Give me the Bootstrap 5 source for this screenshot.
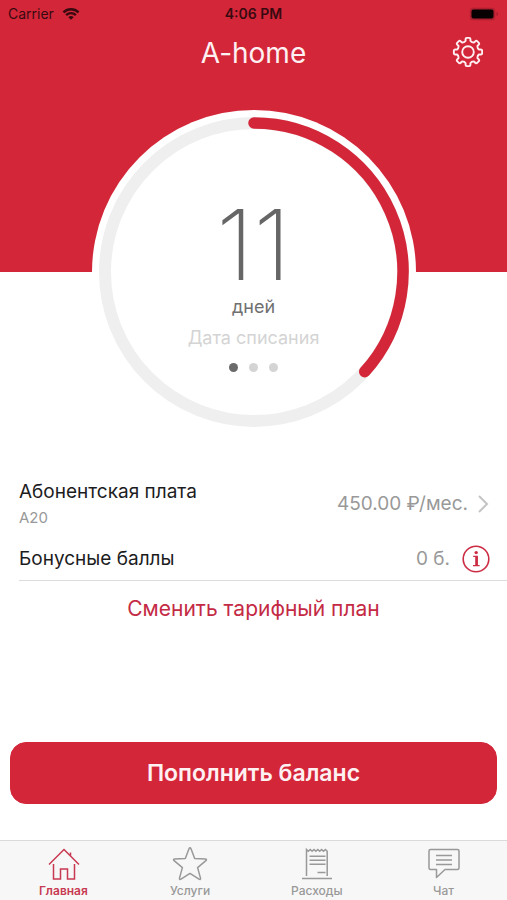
<!DOCTYPE html>
<html lang="ru">
<head>
<meta charset="utf-8">
<meta name="viewport" content="width=device-width, initial-scale=1">
<title>A-home</title>
<link href="https://cdn.jsdelivr.net/npm/bootstrap@5.3.0/dist/css/bootstrap.min.css" rel="stylesheet">
<style>
  :root { --brand: #d32639; --ring: 324px; }
  body { font-family: Inter, "Liberation Sans", sans-serif; color: #1c1c1e; background: #fff; }
  .hero { background: linear-gradient(var(--brand), var(--brand)) top / 100% calc(100% - var(--ring) / 2) no-repeat; }
  .status-bar { font-size: 14px; line-height: 28px; color: #380a10; }
  .status-time { font-weight: 600; }
  .title-bar { height: 50px; margin-bottom: 32px; }
  .side-slot { width: 32px; }
  .app-title { font-size: 28px; line-height: 50px; font-weight: 400; color: #fff0f2; }
  .dial { width: var(--ring); height: var(--ring); }
  .dial > * { grid-area: 1 / 1; }
  .dial-text { padding-top: 87px; }
  .dial-count { font-size: 98px; line-height: 96px; font-weight: 200; color: #666; }
  .dial-unit { font-size: 18px; line-height: 28px; color: #707070; }
  .dial-note { font-size: 18px; line-height: 34px; color: #d4d4d4; }
  .dots { gap: 11px; padding-top: 8px; }
  .dot { width: 9px; height: 9px; background: #d4d4d4; }
  .dot.on { background: #6a6a6a; }
  .details { padding: 44px 0 0 19px; }
  .line-item { padding-right: 17px; font-size: 19px; line-height: 28px; }
  .sub { font-size: 15px; line-height: 24px; color: #999; }
  .amount { color: #999; }
  .chevron { color: #c4c4c6; }
  .info { color: #cc2c44; }
  .bonus { padding-top: 8px; height: 51px; border-bottom: 1px solid #dcdcde; }
  .link-brand { font-size: 21px; line-height: 56px; color: #c42a44; }
  .pay { margin: 0 10px 36px; }
  .btn-pay { --bs-btn-color: #fff0f2; --bs-btn-bg: var(--brand); --bs-btn-border-color: var(--brand);
    --bs-btn-hover-color: #fff; --bs-btn-hover-bg: #b91f31; --bs-btn-hover-border-color: #b91f31;
    height: 62px; border-radius: 16px; font-size: 23px; font-weight: 600; }
  .tabs { height: 60px; background: #f7f7f7; border-top: 1px solid #dadada; }
  .tab { color: #999; font-size: 12px; line-height: 18px; font-weight: 500; padding-top: 4px; }
  .tab.on { color: #c83a52; font-weight: 600; }
  svg { display: block; fill: none; stroke: currentColor; }
</style>
</head>
<body class="d-flex flex-column min-vh-100">

<header class="hero">
  <div class="status-bar row g-0 ps-2 pe-2">
    <div class="col d-flex align-items-center">
      <span>Carrier</span>
      <svg class="ms-2" width="18" height="14" viewBox="0 0 20 14" stroke-width="2.6" aria-hidden="true">
        <path d="M1.6 5.2a12 12 0 0 1 16.8 0M4.6 8.3a7.6 7.6 0 0 1 10.8 0"/>
        <path d="M10 13.4L7 10.6a4.300 4.300 0 0 1 6 0z" fill="currentColor" stroke="none"/>
      </svg>
    </div>
    <div class="col status-time text-center">4:06 PM</div>
    <div class="col d-flex align-items-center justify-content-end">
      <svg width="30" height="14" viewBox="0 0 30 14" aria-hidden="true">
        <rect x=".8" y=".8" width="25.400" height="12.400" rx="3.500" stroke="none" fill="#8a1826" fill-opacity=".5"/>
        <rect x="2.500" y="2.500" width="22" height="9" rx="2" fill="#080102" stroke="none"/>
        <path d="M27.700 5v4.200c1.300-.6 1.300-3.600 0-4.200z" fill="#8a1826" stroke="none"/>
      </svg>
    </div>
  </div>
  <div class="title-bar d-flex align-items-start justify-content-between px-4">
    <span class="side-slot"></span>
    <h1 class="app-title m-0">A-home</h1>
    <button type="button" class="btn p-0 border-0 side-slot app-title" aria-label="Настройки">
      <svg width="32" height="48" viewBox="-17 -24 32 48" stroke-width="1.900" stroke-linejoin="round" aria-hidden="true">
        <circle r="5.800"/>
        <g id="gear"></g>
      </svg>
    </button>
  </div>
  <div class="dial d-grid mx-auto">
    <svg width="324" height="324" viewBox="0 0 324 324" aria-hidden="true">
      <circle cx="162" cy="162" r="162" fill="#fff" stroke="none"/>
      <circle cx="162" cy="162" r="149" stroke="#efefef" stroke-width="12"/>
      <path d="M162 13A149 149 0 0 1 272.730 261.700" stroke="#d32639" stroke-width="11.500" stroke-linecap="round"/>
    </svg>
    <div class="dial-text text-center">
      <div class="dial-count">11</div>
      <div class="dial-unit">дней</div>
      <div class="dial-note">Дата списания</div>
      <div class="dots d-flex justify-content-center">
        <span class="dot on rounded-circle"></span>
        <span class="dot rounded-circle"></span>
        <span class="dot rounded-circle"></span>
      </div>
    </div>
  </div>
</header>

<main class="flex-grow-1 d-flex flex-column">
  <section class="details">
    <a href="#plan" class="line-item d-flex align-items-center justify-content-between text-reset text-decoration-none">
      <span>
        <span class="d-block">Абонентская плата</span>
        <span class="sub d-block">A20</span>
      </span>
      <span class="amount d-flex align-items-center">450.00 ₽/мес.
        <svg class="chevron ms-2" width="14" height="20" viewBox="0 0 14 20" stroke-width="2" aria-hidden="true"><path d="M3 2l8 8-8 8"/></svg>
      </span>
    </a>
    <div class="bonus line-item d-flex align-items-center justify-content-between">
      <span>Бонусные баллы</span>
      <span class="amount d-flex align-items-center">0 б.
        <button type="button" class="btn p-0 border-0 ms-2" aria-label="О бонусных баллах">
          <svg class="info ms-1" width="28" height="28" viewBox="0 0 28 28" stroke-width="1.600" aria-hidden="true">
            <circle cx="14" cy="14" r="12.800"/>
            <path d="M11.200 11.300h4v9M11 20.700h6.600" stroke-width="1.300"/>
            <path d="M14.400 11v9.700" stroke-width="2.400"/>
            <circle cx="14.200" cy="7.600" r="1.700" fill="currentColor" stroke="none"/>
          </svg>
        </button>
      </span>
    </div>
  </section>
  <a href="#change" class="link-brand text-center text-decoration-none">Сменить тарифный план</a>
  <div class="pay mt-auto"><button type="button" class="btn btn-pay w-100">Пополнить баланс</button></div>
</main>

<nav class="tabs row g-0 text-center">
  <a href="#home" class="tab on col text-decoration-none" aria-current="page">
    <svg class="mx-auto" width="36" height="37" viewBox="-1 0 36 37" stroke-width="1.500" aria-hidden="true"><path d="M3 19.500L18 4.500l15 15M7.500 19v15h7V24h7v10h7V19M24.500 10.500V7.500"/></svg>
    Главная</a>
  <a href="#services" class="tab col text-decoration-none">
    <svg class="mx-auto" width="36" height="37" viewBox="0 0 36 37" stroke-width="1.500" stroke-linejoin="round" aria-hidden="true"><path d="M17 3.800q1-2 2 0l3.700 9.700 10.600.5q2 .3.600 1.700l-8.300 6.900 2.900 10.500q.3 2-1.500 1.100L18 28.400l-9 5.800q-1.800.9-1.500-1.100l2.900-10.500-8.300-6.900q-1.400-1.400.6-1.700l10.600-.5z"/></svg>
    Услуги</a>
  <a href="#costs" class="tab col text-decoration-none">
    <svg class="mx-auto" width="36" height="37" viewBox="0 0 36 37" stroke-width="1.500" aria-hidden="true"><path d="M7.500 31V4.500l1.800 1.800 1.900-1.800 1.900 1.800L15 4.500l1.900 1.800 1.900-1.800 1.900 1.800 1.900-1.800 1.900 1.800 1.900-1.800 1.800 1.800V31M3 33.500h30M10.500 11.200h16M10.500 15.200h16M10.500 19.200h16M18.500 27.500h8"/></svg>
    Расходы</a>
  <a href="#chat" class="tab col text-decoration-none">
    <svg class="mx-auto" width="36" height="37" viewBox="0 0 36 37" stroke-width="1.500" stroke-linejoin="round" aria-hidden="true"><path d="M4.500 4.500h27q1.500 0 1.500 1.500v17q0 1.500-1.500 1.500H19l-8.500 8v-8h-6q-1.500 0-1.500-1.500V6q0-1.500 1.500-1.500zM10 10.500h16M10 15h16M10 19.500h16"/></svg>
    Чат</a>
</nav>

<script src="https://cdn.jsdelivr.net/npm/bootstrap@5.3.0/dist/js/bootstrap.bundle.min.js"></script>
<script>
  // Gear outline: eight rounded teeth around a centre at 0,0
  const point = (radius, degrees) => {
    const a = degrees * Math.PI / 180;
    return (radius * Math.sin(a)).toFixed(2) + ' ' + (-radius * Math.cos(a)).toFixed(2);
  };
  let outline = '';
  for (let i = 0; i < 8; i++) {
    const c = i * 45;
    outline += (i ? 'L' : 'M') + point(11.4, c - 12)
      + 'Q' + point(14.4, c - 11) + ' ' + point(14.2, c - 5) + 'L' + point(14.2, c + 5)
      + 'Q' + point(14.4, c + 11) + ' ' + point(11.4, c + 12)
      + 'Q' + point(9.8, c + 22.5) + ' ' + point(11.4, c + 33);
  }
  document.getElementById('gear').innerHTML = '<path d="' + outline + 'Z"/>';
</script>
</body>
</html>
